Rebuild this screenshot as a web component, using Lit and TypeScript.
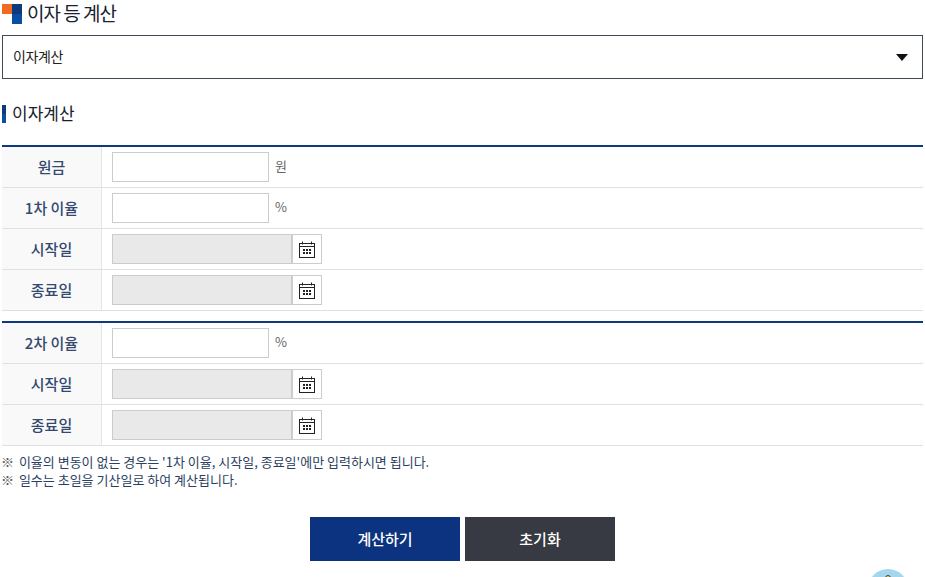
import { LitElement, html, css, svg } from "lit";
import { customElement } from "lit/decorators.js";

const calendar = svg`<svg class="cal" width="16" height="17" viewBox="0 0 16 17" fill="none">
  <rect x="0.5" y="2.5" width="15" height="14" fill="none" stroke="#222"/>
  <path d="M0.5 5.5H15.5" stroke="#222"/>
  <path d="M3.5 0.5V3.5M12.5 0.5V3.5" stroke="#222"/>
  <path d="M4 8h2v2H4zM7 8h2v2H7zM10 8h2v2h-2zM4 11h2v2H4zM7 11h2v2H7zM10 11h2v2h-2z" fill="#222"/>
</svg>`;

@customElement("app-root")
export class AppRoot extends LitElement {
  static styles = css`
    :host {
      display: block;
      position: relative;
      width: 925px;
      height: 577px;
      overflow: hidden;
      background: #fff;
      font-family: "Noto Sans CJK KR", "Noto Sans", sans-serif;
      color: #222;
    }
    .page { padding: 0 2px; display: flex; flex-direction: column; }
    .title {
      display: flex; align-items: center; gap: 5px; height: 23px; margin-top: 1px;
      font-size: 19px; font-weight: 400; letter-spacing: -1px; color: #18222f; line-height: 23px;
    }
    .mark { width: 20px; height: 20px; flex: none; display: grid; grid-template-columns: 10px 10px; grid-template-rows: 10px 10px; margin-top: 2px; }
    .mark i:nth-child(1) { background: #f26a21; }
    .mark i:nth-child(2) { background: #0c3a7d; }
    .mark i:nth-child(3) { background: #fff; }
    .mark i:nth-child(4) { background: #0a4ea3; }
    .select {
      margin-top: 11px; height: 44px; box-sizing: border-box; border: 1px solid #3f4a54;
      display: flex; align-items: center; justify-content: space-between;
      padding: 0 14px 2px 10px; font-size: 14px; letter-spacing: -0.4px; color: #222;
    }
    .arrow { width: 0; height: 0; margin-top: 2px; border-left: 6px solid transparent; border-right: 6px solid transparent; border-top: 7px solid #111; }
    .sub {
      margin-top: 25px; height: 20px; display: flex; align-items: center; gap: 6px;
      font-size: 17px; font-weight: 400; color: #18222f;
    }
    .sub span.t { margin-top: -3px; }
    .bar { width: 4px; height: 18px; background: linear-gradient(#0c3a7d 0 50%, #0a4ea3 50%); }
    .group { border-top: 2px solid #0c3a7d; }
    .g1 { margin-top: 21px; }
    .g2 { margin-top: 10px; }
    .row { display: flex; height: 41px; box-sizing: border-box; border-bottom: 1px solid #e0e0e0; }
    .th {
      width: 100px; flex: none; box-sizing: border-box; background: #f9f9f9; border-right: 1px solid #e5e5e5;
      display: flex; align-items: center; justify-content: center;
      font-size: 15px; font-weight: 500; color: #34496f; padding-bottom: 2px;
    }
    .td { display: flex; align-items: flex-start; padding: 5px 0 0 10px; gap: 6px; }
    .input { width: 157px; height: 30px; box-sizing: border-box; border: 1px solid #ccc; background: #fff; }
    .unit { font-size: 13px; color: #666; line-height: 28px; }
    .date { display: flex; }
    .date .field { width: 180px; height: 30px; box-sizing: border-box; border: 1px solid #ccc; background: #e9e9e9; }
    .date .btn { width: 30px; height: 30px; box-sizing: border-box; border: 1px solid #ccc; display: flex; align-items: flex-start; justify-content: center; padding-top: 6px; background: #fff; }
    .cal { display: block; }
    .notes { margin-top: 7px; font-size: 13px; line-height: 18px; color: #2b3f63; margin-left: -2px; white-space: nowrap; }
    .ref { display: inline-block; box-sizing: border-box; width: 16px; height: 18px; padding-left: 1px; vertical-align: top; color: #555; }
    .btns { display: flex; justify-content: center; gap: 5px; margin-top: 28px; }
    .b { width: 150px; height: 44px; display: flex; align-items: center; justify-content: center; color: #fff; font-size: 15px; font-weight: 500; padding-bottom: 2px; box-sizing: border-box; }
    .b.blue { background: #0c337f; }
    .b.dark { background: #373a42; }
    .fab { position: absolute; left: 868px; top: 569px; width: 40px; height: 40px; border-radius: 50%; background: #a5d6ef; }
    .fab::after { content: ""; position: absolute; left: 17px; top: 6px; width: 4px; height: 4px; border-radius: 50%; background: #f3d25a; border: 1px solid #444; }
  `;

  private dateRow(label: string) {
    return html`<div class="row"><div class="th">${label}</div><div class="td"><div class="date"><div class="field"></div><div class="btn">${calendar}</div></div></div></div>`;
  }
  private inputRow(label: string, unit: string) {
    return html`<div class="row"><div class="th">${label}</div><div class="td"><div class="input"></div><span class="unit">${unit}</span></div></div>`;
  }

  render() {
    return html`<div class="page">
      <div class="title"><div class="mark"><i></i><i></i><i></i><i></i></div>이자 등 계산</div>
      <div class="select"><span>이자계산</span><span class="arrow"></span></div>
      <div class="sub"><span class="bar"></span><span class="t">이자계산</span></div>
      <div class="group g1">
        ${this.inputRow("원금", "원")}
        ${this.inputRow("1차 이율", "%")}
        ${this.dateRow("시작일")}
        ${this.dateRow("종료일")}
      </div>
      <div class="group g2">
        ${this.inputRow("2차 이율", "%")}
        ${this.dateRow("시작일")}
        ${this.dateRow("종료일")}
      </div>
      <div class="notes"><span class="ref">※</span> 이율의 변동이 없는 경우는 '1차 이율, 시작일, 종료일'에만 입력하시면 됩니다.<br /><span class="ref">※</span> 일수는 초일을 기산일로 하여 계산됩니다.</div>
      <div class="btns"><div class="b blue">계산하기</div><div class="b dark">초기화</div></div>
    </div><div class="fab"></div>`;
  }
}
